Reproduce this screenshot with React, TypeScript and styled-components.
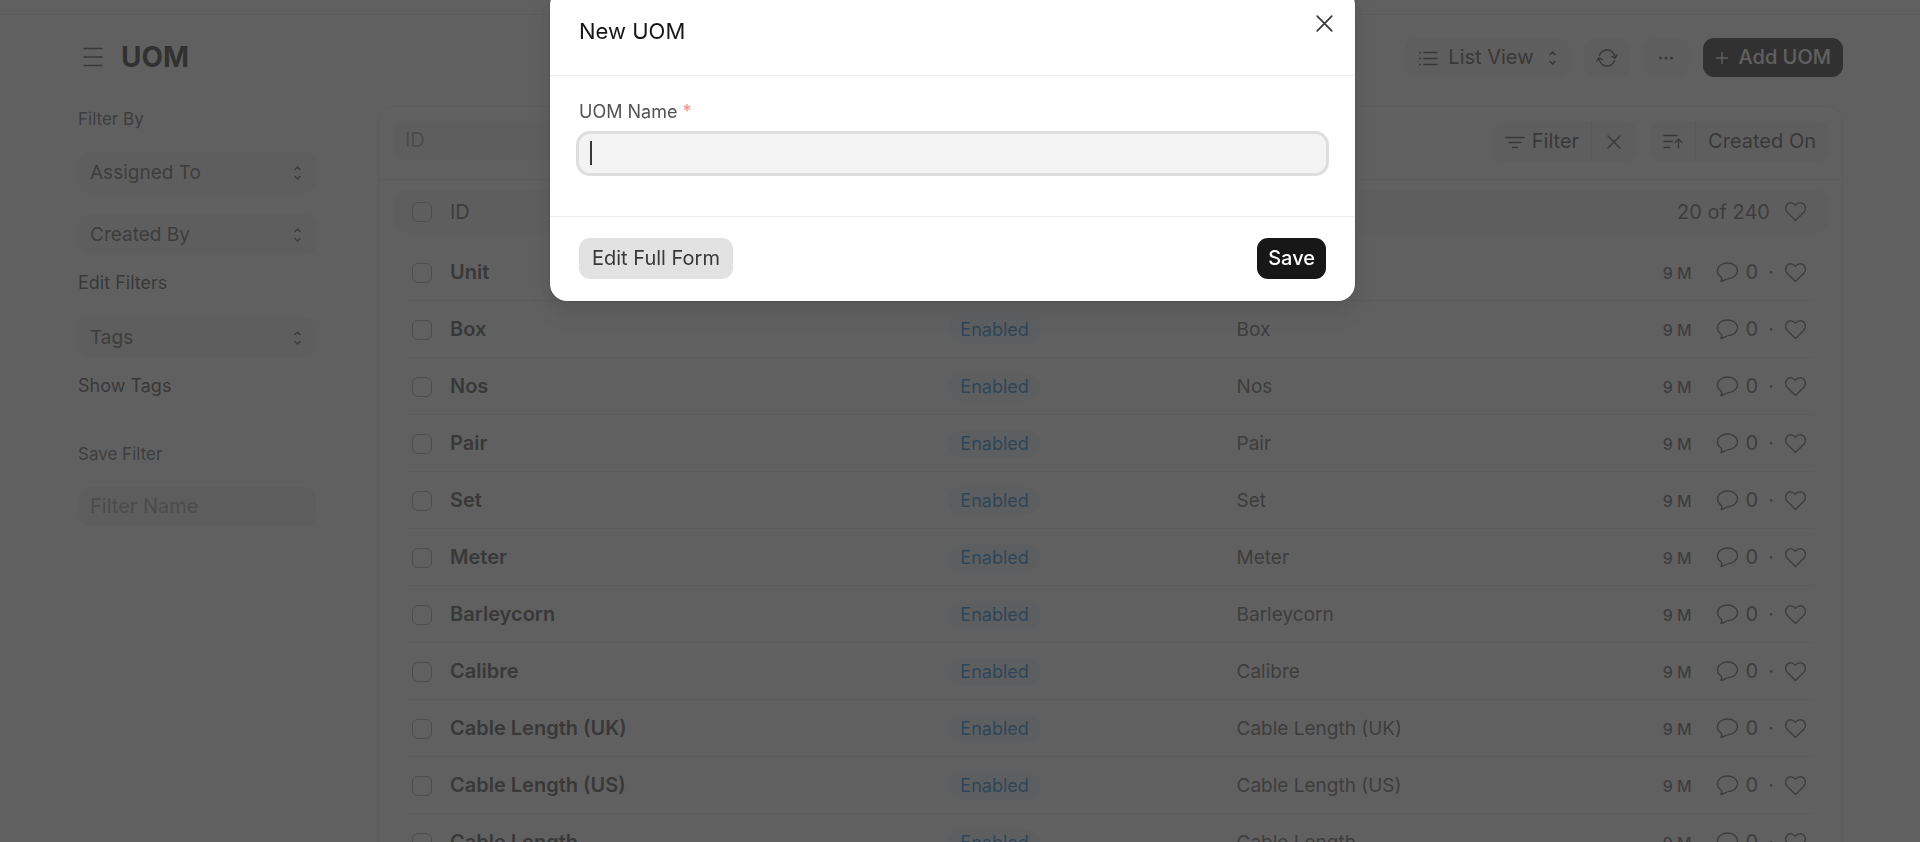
import React from "react";
import styled, { createGlobalStyle, css } from "styled-components";

const GlobalStyle = createGlobalStyle`
  *, *::before, *::after { box-sizing: border-box; }
  body { margin: 0; background: #fff; color: #383838; font-family: Inter, "Liberation Sans", sans-serif; font-size: 20px; line-height: 24px; }
  button, input { font: inherit; color: inherit; }
  h1, h2, p { margin: 0; }
`;

const Page = styled.div`
  height: 100vh;
  overflow: hidden;
`;
const Navbar = styled.header`
  height: 15px;
  border-bottom: 1px solid #e8e8e8;
`;
const Head = styled.div`
  display: flex;
  align-items: center;
  justify-content: space-between;
  height: 85px;
  padding: 0 77px 0 79px;
`;
const TitleGroup = styled.div`
  display: flex;
  align-items: center;
  gap: 14px;
  padding-bottom: 2px;
`;
const MenuButton = styled.button`
  display: flex;
  padding: 0;
  border: 0;
  background: none;
  color: #383838;
`;
const Title = styled.h1`
  font-size: 28px;
  line-height: 32px;
  font-weight: 700;
  color: #171717;
`;
const Actions = styled.div`
  display: flex;
  gap: 14px;
`;
const Button = styled.button<{ $dark?: boolean }>`
  display: flex;
  align-items: center;
  justify-content: center;
  gap: 10px;
  height: 39px;
  min-width: 45px;
  padding: 0 12px;
  border: 0;
  border-radius: 11px;
  background: #f3f3f3;
  white-space: nowrap;
  ${(p) => p.$dark && css`
    background: #171717;
    color: #fff;
    font-weight: 500;
  `}
`;
const ViewButton = styled(Button)`
  padding: 0 13px;
`;
const ButtonText = styled.span`
  padding-bottom: 2px;
`;
const ViewText = styled(ButtonText)`
  margin-right: 4px;
`;
const Body = styled.div`
  display: flex;
  gap: 62px;
  padding: 6px 77px 0 78px;
`;
const Sidebar = styled.aside`
  display: flex;
  flex-direction: column;
  align-items: flex-start;
  flex: 0 0 238px;
`;
const Caption = styled.label`
  padding: 2px 0 22px;
  font-size: 17px;
  line-height: 22px;
  color: #525252;
`;
const SideButton = styled.button`
  display: flex;
  align-items: center;
  justify-content: space-between;
  width: 100%;
  height: 41px;
  margin-bottom: 21px;
  padding: 0 14px 0 12px;
  border: 0;
  border-radius: 11px;
  background: #f3f3f3;
  color: #525252;
  font-size: 19px;
`;
const SideLink = styled.a`
  margin: -4px 0 23px;
  font-size: 18px;
  line-height: 22px;
  color: #383838;
  text-decoration: none;
`;
const Field = styled.input`
  width: 100%;
  height: 39px;
  padding: 0 12px 2px;
  border: 0;
  border-radius: 11px;
  background: #ededed;
  &::placeholder { color: #999; opacity: 1; }
`;
const SaveArea = styled.div`
  display: flex;
  flex-direction: column;
  width: 100%;
  margin-top: 21px;
`;
const Panel = styled.main`
  flex: 1;
  min-width: 0;
  border: 1px solid #e8e8e8;
  border-radius: 14px;
`;
const FilterBar = styled.div`
  display: flex;
  align-items: flex-start;
  justify-content: space-between;
  height: 73px;
  padding: 14px 14px 0;
  border-bottom: 1px solid #e8e8e8;
`;
const IdField = styled(Field)`
  width: 223px;
  background: #f3f3f3;
`;
const Groups = styled.div`
  display: flex;
  gap: 14px;
`;
const ButtonGroup = styled.div`
  display: flex;
  border-radius: 11px;
  overflow: hidden;
  ${Button} {
    gap: 7px;
    height: 41px;
    border-radius: 0;
  }
  ${Button} + ${Button} {
    border-left: 1px solid #e2e2e2;
  }
`;
const Table = styled.table`
  display: block;
  padding: 10px 14px 0;
`;
const HeadGroup = styled.thead`
  display: block;
`;
const Group = styled.tbody`
  display: block;
  padding: 11px 14px 0;
`;
const columns = css`
  display: grid;
  grid-template-columns: 43px 498fr 288fr 577fr;
  align-items: center;
`;
const HeadRow = styled.tr`
  ${columns}
  height: 43px;
  padding: 0 14px;
  border-radius: 11px;
  background: #f3f3f3;
  color: #525252;
`;
const Row = styled.tr`
  ${columns}
  height: 57px;
  padding-top: 1px;
  border-bottom: 1px solid #e8e8e8;
`;
const HeadCell = styled.th`
  padding: 0;
  font-weight: 400;
  text-align: left;
`;
const Cell = styled.td`
  display: flex;
  align-items: center;
  justify-content: space-between;
  padding: 0;
  color: #525252;
`;
const NameLink = styled.a`
  padding-bottom: 2px;
  font-weight: 600;
  color: #383838;
  text-decoration: none;
`;
const NameText = styled.span`
  font-size: 19px;
`;
const Checkbox = styled.input.attrs({ type: "checkbox" })`
  display: block;
  appearance: none;
  width: 20px;
  height: 20px;
  margin: 0 0 0 5px;
  border: 1px solid #999;
  border-radius: 6px;
`;
const Pill = styled.span`
  padding: 2px 12px;
  border-radius: 14px;
  background: #edf6fd;
  color: #007be0;
  font-size: 18px;
`;
const Meta = styled.div`
  display: flex;
  align-items: center;
  justify-content: flex-end;
  gap: 7px;
  padding-right: 7px;
  color: #525252;
`;
const Age = styled.span`
  margin-right: 17px;
  font-size: 16px;
  font-weight: 500;
`;
const Count = styled.span`
  padding-bottom: 2px;
`;
const Dot = styled(Count)`
  margin: 0 3px;
`;
const Total = styled.span`
  margin-right: 7px;
`;
const Backdrop = styled.div`
  position: fixed;
  inset: 0;
  display: flex;
  align-items: flex-start;
  justify-content: center;
  padding-right: 15px;
  background: rgba(56, 56, 56, 0.8);
`;
const Dialog = styled.section`
  width: 100%;
  max-width: 805px;
  margin-top: -12px;
  border-radius: 17px;
  background: #fff;
  box-shadow: 0 10px 24px rgba(0, 0, 0, 0.1), 0 0 2px rgba(0, 0, 0, 0.2);
`;
const DialogHead = styled.header`
  display: flex;
  justify-content: space-between;
  height: 88px;
  padding: 27px 22px 0 29px;
  border-bottom: 1px solid #ededed;
`;
const DialogTitle = styled.h2`
  font-size: 22px;
  line-height: 32px;
  font-weight: 400;
  color: #171717;
`;
const CloseButton = styled(MenuButton)`
  align-self: flex-start;
`;
const DialogBody = styled.div`
  height: 141px;
  padding: 24px 29px 0;
  border-bottom: 1px solid #ededed;
`;
const FieldLabel = styled.label`
  display: block;
  margin-bottom: 10px;
  font-size: 18px;
  color: #525252;
`;
const Required = styled.span`
  color: #f08c8c;
`;
const InputWrap = styled.div`
  position: relative;
`;
const NameInput = styled(Field)`
  display: block;
  background: #f3f3f3;
  outline: 0;
  box-shadow: 0 0 0 3px #dedede;
  caret-color: transparent;
`;
const Caret = styled.span`
  position: absolute;
  top: 7px;
  left: 11px;
  width: 2px;
  height: 24px;
  background: #383838;
`;
const DialogFoot = styled.footer`
  display: flex;
  justify-content: space-between;
  padding: 21px 29px 22px;
`;
const FootButton = styled(Button)`
  height: 41px;
  padding: 0 11px;
`;
const SecondaryButton = styled(FootButton)`
  padding: 0 13px;
  background: #e2e2e2;
`;

const Icon = ({ w = 23, h = w, box = `0 0 ${w} ${h}`, stroke = 1.4, children }: {
  w?: number; h?: number; box?: string; stroke?: number; children: React.ReactNode;
}) => (
  <svg width={w} height={h} viewBox={box} fill="none" stroke="currentColor" strokeWidth={stroke} strokeLinecap="round" strokeLinejoin="round" aria-hidden="true">
    {children}
  </svg>
);
const MenuIcon = () => <Icon w={28}><path d="M5 5.5h18M5 14h18M5 22.5h18" /></Icon>;
const UpDown = () => <Icon w={9} h={16} stroke={1.6}><path d="M2 4.500L4.500 2 7 4.500M2 11.500L4.500 14 7 11.500" /></Icon>;
const ListIcon = () => <Icon w={20}><path d="M6 4.500h13M6 10.500h13M6 16.500h13" /><path strokeWidth="2" d="M2 4.500h.01M2 10.500h.01M2 16.500h.01" /></Icon>;
const RefreshIcon = () => <Icon w={22}><path d="M3.400 8.500a8 8 0 0 1 15.600 2M18.600 13.500a8 8 0 0 1-15.600-2M15.700 9.500l3.400 1.600 2-3.200M6.300 12.500l-3.400-1.600-2 3.200" /></Icon>;
const DotsIcon = () => <Icon w={16} stroke={3}><path d="M2.500 8h.01M8 8h.01M13.500 8h.01" /></Icon>;
const PlusIcon = () => <Icon w={14}><path d="M7 1.500v11M1.500 7h11" /></Icon>;
const FilterIcon = () => <Icon w={20}><path d="M1 5.500h18M4 10.500h12M7.500 15.500h5" /></Icon>;
const CrossIcon = ({ size = 14 }: { size?: number }) => <Icon w={size} box="0 0 14 14"><path d="M1 1l12 12M13 1L1 13" /></Icon>;
const SortIcon = () => <Icon w={20}><path d="M1 3.500h13M1 9.500h8.500M1 15.500h6M15.500 16V7M12 10.500L15.500 7l3.500 3.500" /></Icon>;
const HeartIcon = () => <Icon w={23}><path d="M11.500 5.300C9.500 2.600 5.500 1.800 3.200 4.200 1 6.500 1.200 10 3.200 12.200l8.300 8.300 8.300-8.300c2-2.200 2.200-5.700 0-8-2.300-2.400-6.300-1.600-8.300 1.100z" /></Icon>;
const CommentIcon = () => <Icon w={23}><path d="M11.500 2c5.500 0 10 3.300 10 7.800s-4.500 7.400-9 7.800c-3 .2-4 2.600-7.700 2.700 1-1 1-3 .4-4.100-2.400-1.600-3.700-3.800-3.700-6.400C1.500 5.300 6 2 11.500 2z" /></Icon>;

const uoms = ["Unit", "Box", "Nos", "Pair", "Set", "Meter", "Barleycorn", "Calibre", "Cable Length (UK)", "Cable Length (US)", "Cable Length"];

export default function App() {
  return (
    <>
      <GlobalStyle />
      <Page>
        <Navbar />
        <Head>
          <TitleGroup>
            <MenuButton aria-label="Toggle sidebar"><MenuIcon /></MenuButton>
            <Title>UOM</Title>
          </TitleGroup>
          <Actions>
            <ViewButton><ListIcon /><ViewText>List View</ViewText><UpDown /></ViewButton>
            <Button aria-label="Refresh"><RefreshIcon /></Button>
            <Button aria-label="More"><DotsIcon /></Button>
            <Button $dark><PlusIcon /><ButtonText>Add UOM</ButtonText></Button>
          </Actions>
        </Head>
        <Body>
          <Sidebar>
            <Caption as="p">Filter By</Caption>
            <SideButton>Assigned To<UpDown /></SideButton>
            <SideButton>Created By<UpDown /></SideButton>
            <SideLink href="#filters">Edit Filters</SideLink>
            <SideButton>Tags<UpDown /></SideButton>
            <SideLink href="#tags">Show Tags</SideLink>
            <SaveArea>
              <Caption htmlFor="filter-name">Save Filter</Caption>
              <Field id="filter-name" placeholder="Filter Name" />
            </SaveArea>
          </Sidebar>
          <Panel>
            <FilterBar>
              <IdField aria-label="ID" placeholder="ID" />
              <Groups>
                <ButtonGroup>
                  <Button><FilterIcon /><ButtonText>Filter</ButtonText></Button>
                  <Button aria-label="Clear filters"><CrossIcon /></Button>
                </ButtonGroup>
                <ButtonGroup>
                  <Button aria-label="Sort direction"><SortIcon /></Button>
                  <Button><ButtonText>Created On</ButtonText></Button>
                </ButtonGroup>
              </Groups>
            </FilterBar>
            <Table>
              <HeadGroup>
                <HeadRow>
                  <HeadCell><Checkbox aria-label="Select all" /></HeadCell>
                  <HeadCell>ID</HeadCell>
                  <HeadCell>Status</HeadCell>
                  <HeadCell><Meta><Total>20 of 240</Total><HeartIcon /></Meta></HeadCell>
                </HeadRow>
              </HeadGroup>
              <Group>
                {uoms.map((name) => (
                  <Row key={name}>
                    <Cell><Checkbox aria-label={`Select ${name}`} /></Cell>
                    <Cell><NameLink href="#uom">{name}</NameLink></Cell>
                    <Cell><Pill>Enabled</Pill></Cell>
                    <Cell>
                      <NameText>{name}</NameText>
                      <Meta><Age>9 M</Age><CommentIcon /><Count>0</Count><Dot>·</Dot><HeartIcon /></Meta>
                    </Cell>
                  </Row>
                ))}
              </Group>
            </Table>
          </Panel>
        </Body>
      </Page>
      <Backdrop>
        <Dialog role="dialog" aria-modal="true" aria-labelledby="dialog-title">
          <DialogHead>
            <DialogTitle id="dialog-title">New UOM</DialogTitle>
            <CloseButton aria-label="Close"><CrossIcon size={17} /></CloseButton>
          </DialogHead>
          <DialogBody>
            <FieldLabel htmlFor="uom-name">UOM Name <Required>*</Required></FieldLabel>
            <InputWrap>
              <NameInput id="uom-name" required autoFocus />
              <Caret />
            </InputWrap>
          </DialogBody>
          <DialogFoot>
            <SecondaryButton><ButtonText>Edit Full Form</ButtonText></SecondaryButton>
            <FootButton $dark><ButtonText>Save</ButtonText></FootButton>
          </DialogFoot>
        </Dialog>
      </Backdrop>
    </>
  );
}
